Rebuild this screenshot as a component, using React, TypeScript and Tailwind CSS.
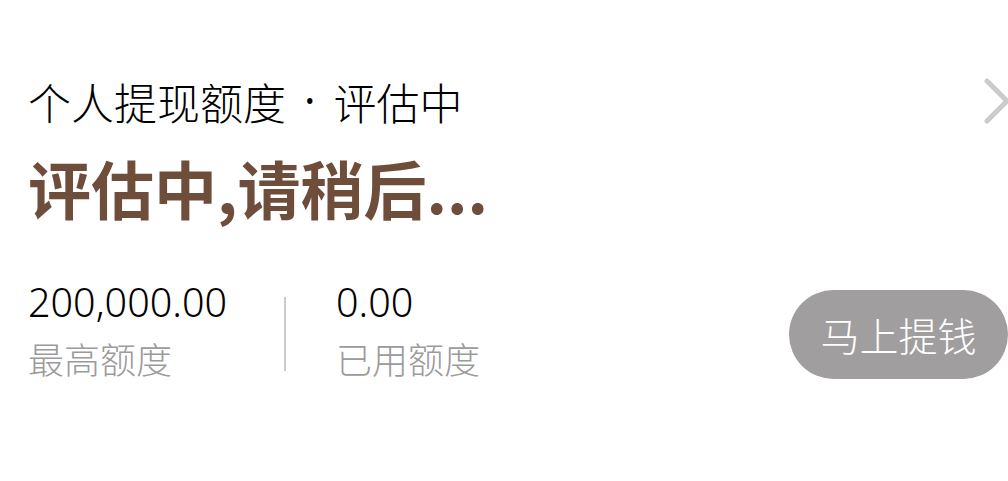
import React from 'react';

const cjk = '"Noto Sans CJK SC", "Noto Sans", sans-serif';
const latin = '"Noto Sans", "Noto Sans CJK SC", sans-serif';

export default function App() {
  return (
    <div className="w-[1008px] h-[481px] bg-white overflow-hidden" style={{ fontFamily: cjk }}>
      <div className="pl-[28px] pt-[76px]">
        <div className="flex items-center justify-between">
          <div className="flex items-center text-[43px] leading-[48px] font-light text-black">
            <span>个人提现额度</span>
            <span className="mx-[18px] font-normal" style={{ fontFamily: latin }}>·</span>
            <span>评估中</span>
          </div>
          <svg width="30" height="50" viewBox="0 0 30 50" className="mr-[-4px]">
            <path d="M5 5 L25 25 L5 45" fill="none" stroke="#cbcbcb" strokeWidth="5" strokeLinecap="round" strokeLinejoin="round" />
          </svg>
        </div>
        <div className="mt-[26px] text-[63px] leading-[70px] font-bold text-[#6e4d3a]">评估中,请稍后...</div>
        <div className="mt-[57px] flex items-center justify-between">
          <div className="flex items-center">
            <div className="w-[256px] flex flex-col">
              <div className="text-[39.5px] leading-[44px] font-light text-black" style={{ fontFamily: latin }}>200,000.00</div>
              <div className="mt-[14px] text-[36px] leading-[40px] font-light text-[#9b9b9b]">最高额度</div>
            </div>
            <div className="w-[2px] h-[74px] mt-[10px] bg-[#cccccc]" />
            <div className="ml-[50px] flex flex-col">
              <div className="text-[39.5px] leading-[44px] font-light text-black" style={{ fontFamily: latin }}>0.00</div>
              <div className="mt-[14px] text-[36px] leading-[40px] font-light text-[#9b9b9b]">已用额度</div>
            </div>
          </div>
          <button className="mt-[11px] w-[219px] h-[89px] rounded-full bg-[#a09e9f] text-white text-[39px] font-light leading-none">
            马上提钱
          </button>
        </div>
      </div>
    </div>
  );
}
